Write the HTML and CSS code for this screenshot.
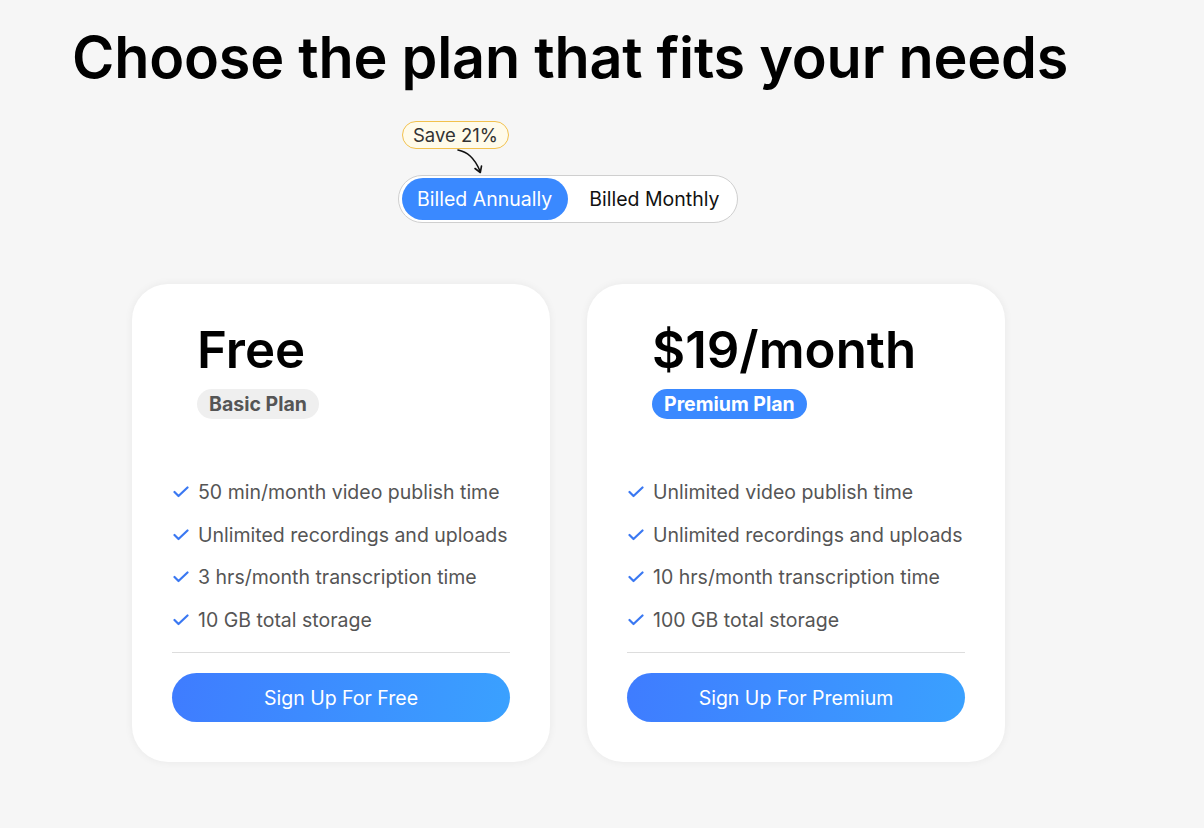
FILE: index.html
```html
<!DOCTYPE html>
<html lang="en">
    <head>
        <meta charset="UTF-8" />
        <meta name="viewport" content="width=device-width, initial-scale=1.0" />
        <title>Pricing</title>
        <link rel="stylesheet" href="styles.css">
    </head>
    <body>
        <div class="page">
            <h1>Choose the plan that fits your needs</h1>

            <div class="billing">
                <div class="save-note">
                    <span class="save-badge">Save 21%</span>
                    <svg class="save-arrow" width="34" height="30" viewBox="0 0 34 30">
                        <path d="M3 2 C 12 4, 19 9, 25 23" fill="none" stroke="#111" stroke-width="1.6" stroke-linecap="round" />
                        <path d="M20 20.5 L25.3 24.5 L26.5 18" fill="none" stroke="#111" stroke-width="1.6" stroke-linecap="round" stroke-linejoin="round" />
                    </svg>
                </div>
                <div class="toggle">
                    <button class="toggle-option active">Billed Annually</button>
                    <button class="toggle-option">Billed Monthly</button>
                </div>
            </div>

            <div class="plans">
                <div class="plan">
                    <div class="plan-head">
                        <div class="price">Free</div>
                        <span class="plan-tag">Basic Plan</span>
                    </div>
                    <ul class="features">
                        <li><svg class="check" viewBox="0 0 16 12"><path d="M1.5 6 L5.5 10 L14.5 1.5" /></svg>50 min/month video publish time</li>
                        <li><svg class="check" viewBox="0 0 16 12"><path d="M1.5 6 L5.5 10 L14.5 1.5" /></svg>Unlimited recordings and uploads</li>
                        <li><svg class="check" viewBox="0 0 16 12"><path d="M1.5 6 L5.5 10 L14.5 1.5" /></svg>3 hrs/month transcription time</li>
                        <li><svg class="check" viewBox="0 0 16 12"><path d="M1.5 6 L5.5 10 L14.5 1.5" /></svg>10 GB total storage</li>
                    </ul>
                    <button class="signup">Sign Up For Free</button>
                </div>

                <div class="plan">
                    <div class="plan-head">
                        <div class="price">$19/month</div>
                        <span class="plan-tag premium">Premium Plan</span>
                    </div>
                    <ul class="features">
                        <li><svg class="check" viewBox="0 0 16 12"><path d="M1.5 6 L5.5 10 L14.5 1.5" /></svg>Unlimited video publish time</li>
                        <li><svg class="check" viewBox="0 0 16 12"><path d="M1.5 6 L5.5 10 L14.5 1.5" /></svg>Unlimited recordings and uploads</li>
                        <li><svg class="check" viewBox="0 0 16 12"><path d="M1.5 6 L5.5 10 L14.5 1.5" /></svg>10 hrs/month transcription time</li>
                        <li><svg class="check" viewBox="0 0 16 12"><path d="M1.5 6 L5.5 10 L14.5 1.5" /></svg>100 GB total storage</li>
                    </ul>
                    <button class="signup">Sign Up For Premium</button>
                </div>
            </div>
        </div>
    </body>
</html>
```

FILE: styles.css
```css
body {
    font-family: Inter, "Noto Sans", sans-serif;
    margin: 0;
    background-color: #f6f6f6;
    color: #000;
}
.page {
    padding: 21px 0 0 72px;
    height: 807px;
}
h1 {
    margin: 0;
    font-size: 57.5px;
    font-weight: 600;
    line-height: 72px;
    letter-spacing: -0.2px;
}
.billing {
    margin: 28px 0 0 326px;
    width: 340px;
}
.save-note {
    display: flex;
    flex-direction: column;
    padding-left: 4px;
}
.save-badge {
    align-self: flex-start;
    font-size: 18.5px;
    color: #333;
    background: #fffbea;
    border: 1px solid #f2c14e;
    border-radius: 14px;
    padding: 3px 10px;
    line-height: 20px;
}
.save-arrow {
    margin: -1px 0 0 53px;
    display: block;
}
.toggle {
    display: flex;
    align-items: center;
    background: #fff;
    border: 1px solid #cfcfcf;
    border-radius: 25px;
    padding: 2px 3px;
    height: 42px;
    margin-top: -3px;
}
.toggle-option {
    font-family: inherit;
    font-size: 19.5px;
    white-space: nowrap;
    flex-shrink: 0;
    border: none;
    background: none;
    color: #111;
    height: 42px;
    border-radius: 21px;
    padding: 0 15px 0 21px;
    cursor: pointer;
}
.toggle-option.active {
    background: #3a89ff;
    color: #fff;
    padding: 0 16px 0 15px;
}
.plans {
    display: flex;
    gap: 37px;
    margin: 61px 0 0 60px;
}
.plan {
    width: 338px;
    height: 430px;
    background: #fff;
    border-radius: 36px;
    padding: 24px 40px 24px 40px;
    box-shadow: 0 0 8px rgba(0, 0, 0, 0.06);
    display: flex;
    flex-direction: column;
}
.plan-head {
    padding: 12px 0 0 25px;
    height: 141px;
}
.price {
    font-size: 51px;
    font-weight: 600;
    line-height: 60px;
}
.plan-tag {
    display: inline-block;
    margin-top: 9px;
    font-size: 19.5px;
    font-weight: 700;
    color: #555;
    background: #efefef;
    border-radius: 15px;
    padding: 0 12px;
    line-height: 30px;
}
.plan-tag.premium {
    background: #3a89ff;
    color: #fff;
}
.features {
    list-style: none;
    margin: 0;
    padding: 10px 0 11px;
    border-bottom: 1px solid #dddddd;
}
.features li {
    display: flex;
    align-items: center;
    gap: 9px;
    font-size: 19.5px;
    color: #555;
    height: 42.6px;
    padding-left: 1px;
}
.check {
    width: 16px;
    height: 12px;
    fill: none;
    stroke: #3a78f2;
    stroke-width: 2.2;
    stroke-linecap: round;
    stroke-linejoin: round;
}
.signup {
    margin-top: 20px;
    height: 49px;
    border: none;
    border-radius: 25px;
    background: linear-gradient(100deg, #3f7cff, #3aa1ff);
    color: #fff;
    font-family: inherit;
    font-size: 19.5px;
    cursor: pointer;
}
```
